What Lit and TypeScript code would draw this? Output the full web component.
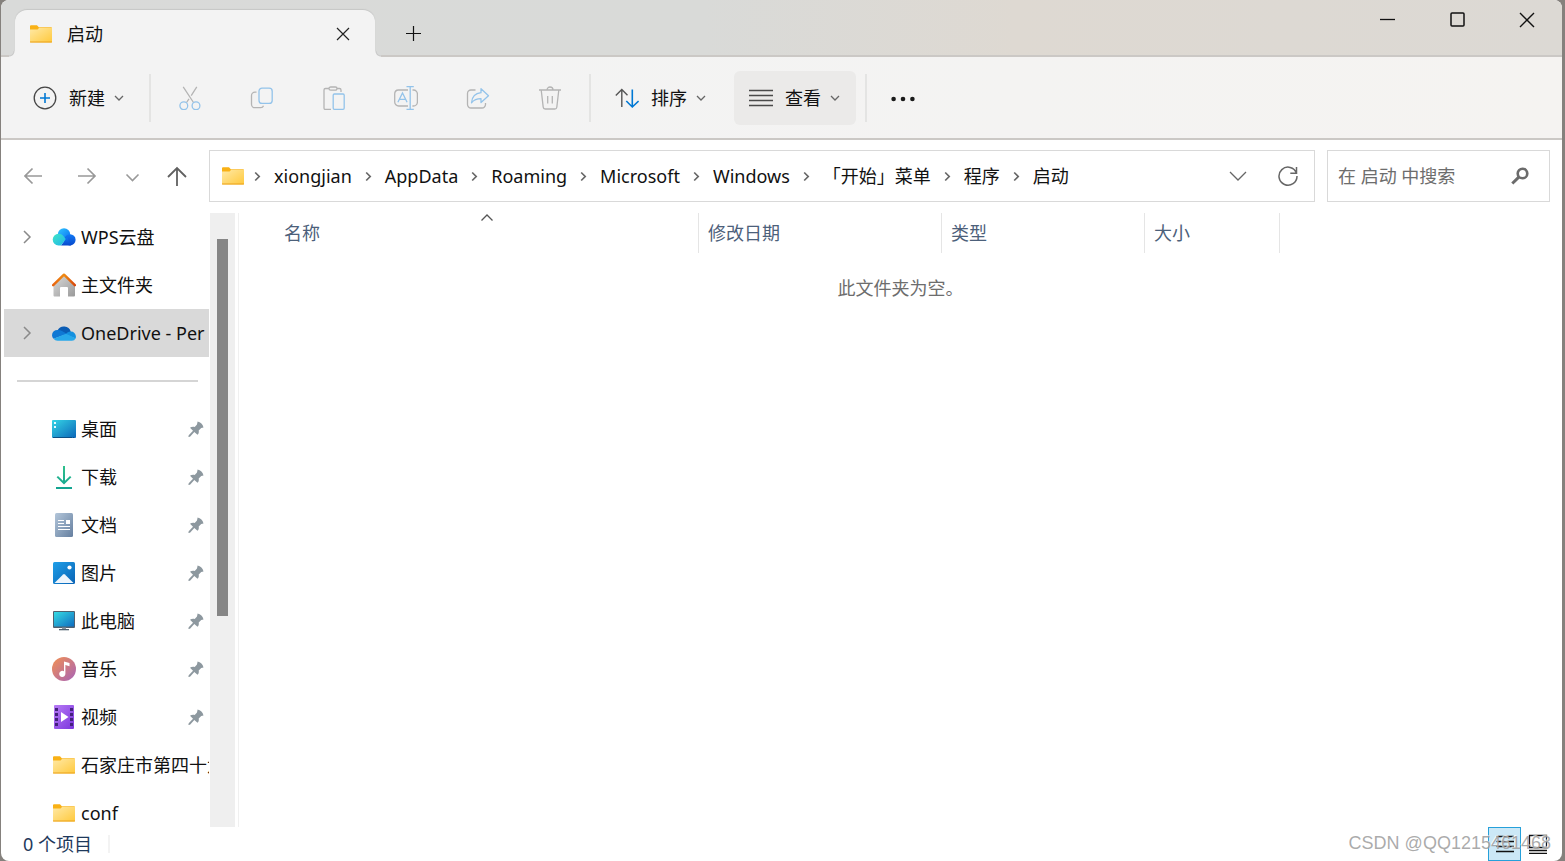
import { LitElement, html, css, svg, nothing } from "lit";
import { customElement, property } from "lit/decorators.js";

const folder = svg`
  <defs><linearGradient id="fo" x1="0" y1="0" x2="1" y2="1"><stop offset="0" stop-color="#ffe9a6"/><stop offset="1" stop-color="#ffc93c"/></linearGradient></defs>
  <path d="M1 4.200a1 1 0 0 1 1-1h6l1.800 2H22a1 1 0 0 1 1 1V12H1z" fill="#f9b115"/>
  <path d="M1 7.400h7.600l1.600-1.600H23v14a.7.7 0 0 1-.7.7H1.700a.7.7 0 0 1-.7-.7z" fill="url(#fo)"/>
  <path d="M1 19.400h22v.5a.7.7 0 0 1-.7.7H1.700a.7.7 0 0 1-.7-.7z" fill="#eba21c"/>`;

const icons: Record<string, unknown> = {
  folder,
  wps: svg`
    <defs>
      <linearGradient id="wa" x1="0" y1="0" x2="1" y2="1"><stop offset="0" stop-color="#2fc7ff"/><stop offset="1" stop-color="#0a6cf0"/></linearGradient>
      <linearGradient id="wb" x1="0" y1="0" x2="1" y2="1"><stop offset="0" stop-color="#3fe6c8"/><stop offset="1" stop-color="#1fb4e8"/></linearGradient>
      <linearGradient id="wc" x1="0" y1="0" x2="0" y2="1"><stop offset="0" stop-color="#1179f5"/><stop offset="1" stop-color="#0849cc"/></linearGradient>
    </defs>
    <circle cx="12" cy="9.400" r="6.200" fill="url(#wa)"/>
    <circle cx="18" cy="14.800" r="5.600" fill="url(#wc)"/>
    <path d="M9 20.400 15 12l4 8.400z" fill="url(#wc)"/>
    <path d="M6.500 8.800c4 0 5.300 2.800 7.300 5.200L9 20.400H6.500a5.800 5.800 0 0 1 0-11.600z" fill="url(#wb)"/>`,
  home: svg`
    <defs>
      <linearGradient id="ha" x1="0" y1="0" x2="1" y2="1"><stop offset="0" stop-color="#d9d9d9"/><stop offset="1" stop-color="#9a9a9a"/></linearGradient>
      <linearGradient id="hb" x1="0" y1="0" x2="1" y2="0"><stop offset="0" stop-color="#e8640f"/><stop offset=".5" stop-color="#ef8b12"/><stop offset="1" stop-color="#d8470b"/></linearGradient>
    </defs>
    <path d="M12 2.500 1.500 12v10.500a1 1 0 0 0 1 1H8v-8.500a1 1 0 0 1 1-1h6a1 1 0 0 1 1 1v8.500h6a1 1 0 0 0 1-1V12z" fill="url(#ha)"/>
    <path d="M1.200 12.200 12 1.700l10.800 10.500" fill="none" stroke="url(#hb)" stroke-width="2.500" stroke-linecap="round" stroke-linejoin="round"/>`,
  onedrive: svg`
    <path d="M5.500 9.500a7.200 7.200 0 0 1 13.300 1.200L14 14.500z" fill="#0a5cb4"/>
    <path d="M5.700 8.900c2.600-.2 4.800.8 9.300 4L1.600 17.800A5 5 0 0 1 0 14.200a5.400 5.400 0 0 1 5.700-5.300z" fill="#0f78d4"/>
    <path d="M18.400 10.600a5 5 0 0 1 5.500 5.300c0 .6-.1 1.100-.4 1.600L13.500 13.500c1.500-1.800 3-2.800 4.900-2.900z" fill="#1490df"/>
    <path d="m1.500 17.700 12.500-5 9.600 4.600a4 4 0 0 1-3.800 2.500H5.500a5.300 5.300 0 0 1-4-2.100z" fill="#28a8ea"/>`,
  desktop: svg`
    <defs><linearGradient id="de" x1="0" y1="0" x2="1" y2="1"><stop offset="0" stop-color="#35d5e6"/><stop offset="1" stop-color="#0b66b8"/></linearGradient></defs>
    <rect y="3" width="24" height="18" rx="1" fill="url(#de)"/>
    <path d="M2 5h2v2H2zM2 9h2v2H2z" fill="#e8fbff"/>
    <path d="M1 20h18v1H1zM19 20h1v1h-1zM21 20h1v1h-1z" fill="#0d4f84"/>`,
  download: svg`
    <defs><linearGradient id="dl" x1="0" y1="0" x2="0" y2="1"><stop offset="0" stop-color="#2fc08c"/><stop offset="1" stop-color="#12a391"/></linearGradient></defs>
    <path d="M11 1h2v14.800l5-4.900 1.400 1.400-7.400 7.200-7.400-7.200L6 10.900l5 4.900zM4 22h16v2H4z" fill="url(#dl)"/>`,
  document: svg`
    <defs><linearGradient id="dc" x1="0" y1="0" x2="1" y2="1"><stop offset="0" stop-color="#b3c6da"/><stop offset="1" stop-color="#657f9f"/></linearGradient></defs>
    <rect x="3" width="18" height="24" rx="1.500" fill="url(#dc)"/>
    <path d="M6 7h6v1H6zM6 10h6v1H6zM6 13h12v1H6zM6 16h12v1H6zM14 7h4v4h-4z" fill="#fff"/>`,
  picture: svg`
    <defs><linearGradient id="pi" x1="0" y1="0" x2="1" y2="1"><stop offset="0" stop-color="#1f9fe8"/><stop offset="1" stop-color="#0a63b5"/></linearGradient></defs>
    <rect x="1" y="1" width="22" height="22" rx="1.500" fill="url(#pi)"/>
    <circle cx="17.500" cy="6.500" r="2.100" fill="#fff"/>
    <path d="m2.500 22 8.600-8.500a1.300 1.300 0 0 1 1.800 0L21.500 22z" fill="#eef5fc"/>`,
  pc: svg`
    <defs><linearGradient id="pc" x1="0" y1="0" x2="1" y2="1"><stop offset="0" stop-color="#35dbe4"/><stop offset="1" stop-color="#0f6cc0"/></linearGradient></defs>
    <rect x="1" y="2" width="22" height="17" rx="1" fill="#4f6170"/>
    <rect x="2" y="3" width="20" height="14.500" fill="url(#pc)"/>
    <path d="M10 18.500h4V20h-4z" fill="#8895a0"/><path d="M7 20h10v1.300H7z" fill="#4f6170"/>`,
  music: svg`
    <defs><linearGradient id="mu" x1="0" y1="0" x2="1" y2="1"><stop offset="0" stop-color="#f39152"/><stop offset="1" stop-color="#a662b8"/></linearGradient></defs>
    <circle cx="12" cy="12" r="12" fill="url(#mu)"/>
    <path d="M12 4.500 17.500 6v3.200L13.400 8v8.800a3.100 3.100 0 1 1-1.400-2.500z" fill="#fff"/>`,
  video: svg`
    <defs><linearGradient id="vi" x1="0" y1="0" x2="1" y2="1"><stop offset="0" stop-color="#b77bf5"/><stop offset="1" stop-color="#7b35dd"/></linearGradient></defs>
    <rect x="2" width="20" height="24" rx="1" fill="url(#vi)"/>
    <path d="M3 3h3v3H3zM3 8h3v3H3zM3 13h3v3H3zM3 18h3v3H3zM18 3h3v3h-3zM18 8h3v3h-3zM18 13h3v3h-3zM18 18h3v3h-3z" fill="#43217c"/>
    <path d="M9 7v10l7.500-5z" fill="#fff"/>`,
  pin: svg`<path d="M9.600.6c2.900.5 5.300 2.700 5.900 5.800l-2.300.5-2.500 2.600c.4 1.900 0 3.200-1.200 4.300L6.300 11 2 15.700.4 16l.3-1.700L5 9.800 2 6.800c1.300-1.100 3-1.200 4.700-.9L9 3.500z" fill="#8d989f"/>`,
  add: svg`<circle cx="12" cy="12" r="10.800" fill="none" stroke="#454545" stroke-width="1.300"/><path d="M12 7v10M7 12h10" stroke="#0078d4" stroke-width="1.600"/>`,
  cut: svg`
    <path d="M5.200.9 15.500 16.500M18.800.9 13.200 9.600M11 12.800 8.500 16.500" stroke="#b4b4b4"/>
    <circle cx="5.800" cy="19.700" r="3.900" stroke="#93c3ea"/><circle cx="18" cy="19.700" r="3.900" stroke="#93c3ea"/>`,
  copy: svg`
    <path d="M6.500 6.200H5A3.500 3.500 0 0 0 1.500 9.700v8.500a3.500 3.500 0 0 0 3.500 3.500h5.500a3 3 0 0 0 3-2" stroke="#b4b4b4"/>
    <rect x="9" y="2.200" width="13.200" height="15.200" rx="3" stroke="#93c3ea"/>`,
  paste: svg`
    <path d="M7 2.500H3.500A1.500 1.500 0 0 0 2 4v18a1.500 1.500 0 0 0 1.500 1.500H9M15 2.500h2.500A1.500 1.500 0 0 1 19 4v2" stroke="#b4b4b4"/>
    <rect x="7" y="1" width="8" height="3.200" rx="1.600" stroke="#b4b4b4"/>
    <rect x="11.200" y="8" width="11" height="15.300" rx="1.200" stroke="#93c3ea"/>`,
  rename: svg`
    <path d="M14 4H4.500A4 4 0 0 0 .7 8v8a4 4 0 0 0 4 4H14M18.500 4h1a4 4 0 0 1 3.900 4v8a4 4 0 0 1-4 4h-1" stroke="#b4b4b4"/>
    <path d="M12.500.7h7.300M12.500 23.300h7.300M16.200.7v22.600M3.900 16.200 8.500 7l4.600 9.200M5.300 13.400h6.400" stroke="#93c3ea"/>`,
  share: svg`
    <path d="M9.500 4H5a3.500 3.500 0 0 0-3.500 3.500v11A3.500 3.500 0 0 0 5 22h11a3.500 3.500 0 0 0 3.500-3.500V17" stroke="#b4b4b4"/>
    <path d="M15 2.700 22.500 9.700 15 16.500v-3.800c-4.300 0-6.700.8-9.500 4 .5-6 3.700-9.400 9.500-10z" stroke="#93c3ea" stroke-linejoin="round"/>`,
  trash: svg`<path d="M1 4h22M9 4a3 3 0 0 1 6 0M3.200 4l2 17.200A2 2 0 0 0 7.200 23h9.600a2 2 0 0 0 2-1.800L20.800 4M9.700 10v7.500M14.300 10v7.500" stroke="#b4b4b4"/>`,
  sort: svg`
    <path d="M6.800 21V3.500M.8 9.500l6-6 5.700 5.700" fill="none" stroke="#555" stroke-width="1.400"/>
    <path d="M17.300 3.500V21M11.300 15l6 6 6.300-6" fill="none" stroke="#0078d4" stroke-width="1.600"/>`,
  lines: svg`<path d="M0 4.500h24M0 9.500h24M0 14.500h24M0 19.500h24" stroke="#4a4a4a" stroke-width="1.300"/>`,
  dots: svg`<g fill="#1a1a1a"><circle cx="2.600" cy="13" r="2.300"/><circle cx="12" cy="13" r="2.300"/><circle cx="21.400" cy="13" r="2.300"/></g>`,
  chevDown: svg`<path d="m2 4 4 4 4-4" fill="none" stroke="#666"/>`,
  chevRecent: svg`<path d="m1.500 5.500 6 6 6-6" fill="none" stroke="#999" stroke-width="1.600"/>`,
  chevAddress: svg`<path d="m1 5 8 8 8-8" fill="none" stroke="#666" stroke-width="1.300"/>`,
  chevUp: svg`<path d="m.5 6.500 5.500-5.500 5.500 5.500" fill="none" stroke="#555"/>`,
  chevRight: svg`<path d="m5 2 6 6-6 6" fill="none" stroke="#8a8a8a" stroke-width="1.500"/>`,
  chevCrumb: svg`<path d="m1.200 2.500 4 4-4 4" fill="none" stroke="#666" stroke-width="1.700"/>`,
  back: svg`<path d="M18 10H1M8.500 2.500 1 10l7.500 7.500" fill="none" stroke="#999" stroke-width="1.700"/>`,
  forward: svg`<path d="M1 10h17M10.500 2.500 18 10l-7.500 7.500" fill="none" stroke="#999" stroke-width="1.700"/>`,
  up: svg`<path d="M10 20V2M1 11l9-9 9 9" fill="none" stroke="#606060" stroke-width="1.800"/>`,
  refresh: svg`<path d="M18.500 7.200A9 9 0 1 0 19 10M18.500 1v6.200h-6.200" fill="none" stroke="#666" stroke-width="1.500"/>`,
  search: svg`<circle cx="11.500" cy="6.500" r="4.800" fill="none" stroke="#6b6b6b" stroke-width="2.600"/><path d="m7.800 10.200-6.500 6.300" stroke="#6b6b6b" stroke-width="3"/>`,
  close: svg`<path d="m1 1 14 14M15 1 1 15" stroke="#111" stroke-width="1.400"/>`,
  tabClose: svg`<path d="m1 1 12 12M13 1 1 13" stroke="#222" stroke-width="1.200"/>`,
  plus: svg`<path d="M7.500 0v15M0 7.500h15" stroke="#111" stroke-width="1.200"/>`,
  minimise: svg`<path d="M0 7.500h15" stroke="#111"/>`,
  maximise: svg`<rect x="1" y="1" width="13" height="13" rx="1" fill="none" stroke="#111" stroke-width="1.500"/>`,
  details: svg`<path d="M1 2.500h18M1 7.500h18M1 12.500h18M1 17.500h18" stroke="#111"/>`,
  tiles: svg`<path d="M1.500 1.500h17v12h-17zM1 16.500h18M1 19.500h18" fill="none" stroke="#111"/>`,
};

const icon = (name: string, w = 24, h = w) =>
  html`<svg width=${w} height=${h} viewBox="0 0 ${w} ${h}" fill="none" stroke-width="1.300" aria-hidden="true">${icons[name]}</svg>`;

const FONT = css`
  :host { box-sizing: border-box; font: 18px/24px "Noto Sans", "Noto Sans CJK SC", sans-serif; color: #111; }
  * { box-sizing: border-box; }
  svg { display: block; flex: none; }
  button { font: inherit; color: inherit; background: none; border: 0; padding: 0; margin: 0;
    display: flex; align-items: center; justify-content: center; }
`;

@customElement("title-bar")
class TitleBar extends LitElement {
  static styles = [FONT, css`
    :host { display: flex; height: 57px; flex: none; padding-left: 14px;
      background: linear-gradient(#cbc8c5, #cbc8c5) 0 100% / 100% 2px no-repeat,
        linear-gradient(90deg, #d9dad9, #d9dad8 45%, #ded9d2 65%, #dcd9d4); }
    .tab { position: relative; display: flex; align-items: center; width: 360px; height: 47px; margin-top: 10px;
      padding: 0 14px; background: #f3f3f3; border-radius: 12px 12px 0 0; box-shadow: 0 -1px 1px #c6c7c6; }
    .tab::before, .tab::after { content: ""; position: absolute; bottom: 0; width: 6px; height: 6px; }
    .tab::before { left: -6px; background: radial-gradient(circle at 0 0, #d9dad9 4px, #c8c8c8 5px, #f3f3f3 6px); }
    .tab::after { right: -6px; background: radial-gradient(circle at 100% 0, #d9dad9 4px, #c8c8c8 5px, #f3f3f3 6px); }
    .name { margin-left: 14px; flex: 1; }
    .close { width: 36px; height: 32px; }
    .new { width: 48px; height: 47px; margin: 10px 0 0 14px; }
    .controls { display: flex; margin-left: auto; }
    .controls button { width: 70px; height: 39px; }
  `];
  render() {
    return html`
      <div class="tab">${icon("folder")}<span class="name">启动</span>
        <button class="close" aria-label="关闭标签页">${icon("tabClose", 14)}</button></div>
      <button class="new" aria-label="新标签页">${icon("plus", 15)}</button>
      <div class="controls">
        <button aria-label="最小化">${icon("minimise", 15)}</button>
        <button aria-label="最大化">${icon("maximise", 15)}</button>
        <button aria-label="关闭">${icon("close", 16)}</button>
      </div>`;
  }
}

@customElement("tool-bar")
class ToolBar extends LitElement {
  static styles = [FONT, css`
    :host { display: flex; align-items: center; height: 83px; flex: none; padding-left: 17px;
      background: linear-gradient(90deg, #f3f3f3 30%, #f5f3f1); border-bottom: 2px solid #cbc8c5; }
    .menu { width: 122px; height: 54px; border-radius: 6px; gap: 12px; }
    .menu svg:last-child { margin-left: -4px; }
    .on { background: #ebeae9; }
    .rule { width: 2px; height: 48px; margin: 0 9px; background: #e4e4e3; }
    .tools, .menus { display: flex; gap: 12px; }
    .tools button { width: 60px; height: 54px; }
    .more { width: 54px; height: 54px; }
  `];
  menu(ic: string, label: string, on = false) {
    return html`<button class="menu ${on ? "on" : ""}">${icon(ic)}<span>${label}</span>${icon("chevDown", 12)}</button>`;
  }
  render() {
    const tools = [["cut", "剪切"], ["copy", "复制"], ["paste", "粘贴"], ["rename", "重命名"], ["share", "共享"], ["trash", "删除"]];
    return html`
      ${this.menu("add", "新建")}
      <div class="rule"></div>
      <div class="tools">${tools.map(([i, l]) => html`<button aria-label=${l}>${icon(i)}</button>`)}</div>
      <div class="rule"></div>
      <div class="menus">${this.menu("sort", "排序")}${this.menu("lines", "查看", true)}</div>
      <div class="rule"></div>
      <button class="more" aria-label="更多">${icon("dots")}</button>`;
  }
}

@customElement("address-bar")
class AddressBar extends LitElement {
  static styles = [FONT, css`
    :host { display: flex; height: 73px; flex: none; padding: 10px 12px 11px 11px; }
    .history { display: flex; gap: 9px; width: 197px; flex: none; }
    .history button { width: 44px; }
    .history .recent { width: 28px; }
    .address { display: flex; align-items: center; flex: 1; min-width: 0; border: 1px solid #d9d9d9; padding: 0 6px 0 11px; }
    .crumbs { display: flex; align-items: center; flex: 1; min-width: 0; overflow: hidden; white-space: nowrap; }
    .crumbs a { color: #111; text-decoration: none; }
    .sep { margin: 0 13px; }
    .sep:first-child { margin-left: 9px; }
    .address button { width: 40px; height: 50px; margin-left: 10px; }
    .search { display: flex; align-items: center; width: 223px; margin-left: 12px; border: 1px solid #d9d9d9; padding: 0 20px 0 10px; }
    input { flex: 1; min-width: 0; height: 48px; font: inherit; border: 0; outline: 0; padding: 0; background: none; }
    input::placeholder { color: #6d6d6d; opacity: 1; }
  `];
  render() {
    const path = ["xiongjian", "AppData", "Roaming", "Microsoft", "Windows", "「开始」菜单", "程序", "启动"];
    return html`
      <div class="history">
        <button aria-label="后退">${icon("back", 20)}</button>
        <button aria-label="前进">${icon("forward", 20)}</button>
        <button class="recent" aria-label="最近位置">${icon("chevRecent", 15)}</button>
        <button aria-label="向上">${icon("up", 20)}</button>
      </div>
      <div class="address">
        ${icon("folder")}
        <nav class="crumbs">${path.map((p) => html`<span class="sep">${icon("chevCrumb", 7, 12)}</span><a href="#">${p}</a>`)}</nav>
        <button aria-label="历史记录">${icon("chevAddress", 18)}</button>
        <button aria-label="刷新">${icon("refresh", 20)}</button>
      </div>
      <label class="search"><input type="text" placeholder="在 启动 中搜索" aria-label="搜索">${icon("search", 18)}</label>`;
  }
}

interface Place { icon: string; label: string; expand?: boolean; pin?: boolean; selected?: boolean }

@customElement("side-tree")
class SideTree extends LitElement {
  @property({ attribute: false }) places: (Place | null)[] = [];
  static styles = [FONT, css`
    :host { display: flex; width: 238px; flex: none; border-right: 1px solid #f0f0f0; overflow: hidden; }
    .list { width: 208px; padding-left: 3px; margin: 0; list-style: none; overflow: hidden; }
    li { height: 48px; }
    .row { display: flex; align-items: center; height: 48px; padding-left: 15px; color: #111; text-decoration: none; white-space: nowrap; }
    .selected { background: #d9d9d9; }
    .twist { width: 33px; flex: none; }
    .label { margin-left: 5px; flex: 1; min-width: 0; overflow: hidden; }
    .pin { margin-right: 5px; }
    .gap { display: flex; align-items: center; padding: 0 11px 0 13px; }
    hr { flex: 1; height: 2px; border: 0; margin: 0; background: #d5d5d5; }
    .track { width: 25px; margin-left: 1px; padding: 26px 7px 0; background: #efefef; }
    .thumb { height: 377px; background: #868686; }
  `];
  render() {
    return html`
      <ul class="list">${this.places.map((p) => p
        ? html`<li><a href="#" class="row ${p.selected ? "selected" : ""}">
            <span class="twist">${p.expand ? icon("chevRight", 16) : nothing}</span>${icon(p.icon)}
            <span class="label">${p.label}</span>${p.pin ? html`<span class="pin">${icon("pin", 16)}</span>` : nothing}</a></li>`
        : html`<li class="gap"><hr></li>`)}</ul>
      <div class="track"><div class="thumb"></div></div>`;
  }
}

@customElement("file-list")
class FileList extends LitElement {
  static styles = [FONT, css`
    :host { display: block; flex: 1; min-width: 0; overflow: hidden; }
    table { border-collapse: separate; border-spacing: 0; table-layout: fixed; margin-left: 36px; width: 1005px; }
    th { position: relative; height: 40px; padding: 0 0 0 9px; text-align: left; font-weight: 400; color: #4c607a;
      border-right: 1px solid #e5e5e5; }
    .name { width: 424px; }
    .date { width: 243px; }
    .type { width: 203px; }
    .sorted { position: absolute; top: 1px; left: 0; right: 0; display: flex; justify-content: center; }
    .empty { margin: 23px 0 0; text-align: center; color: #6d6d6d; }
  `];
  render() {
    return html`
      <table><thead><tr>
        <th class="name" scope="col" aria-sort="ascending">名称<span class="sorted">${icon("chevUp", 12, 8)}</span></th>
        <th class="date" scope="col">修改日期</th><th class="type" scope="col">类型</th><th scope="col">大小</th>
      </tr></thead></table>
      <p class="empty">此文件夹为空。</p>`;
  }
}

@customElement("status-bar")
class StatusBar extends LitElement {
  static styles = [FONT, css`
    :host { position: relative; display: flex; align-items: center; height: 34px; flex: none; padding: 0 8px 0 22px; color: #1e395b; }
    .count { padding-right: 16px; border-right: 2px solid #f3f3f3; line-height: 18px; }
    .views { display: flex; margin-left: auto; height: 34px; }
    .views button { width: 33px; }
    .views .on { border: 1px solid #26a0da; background: #cce8f6; }
    .mark { position: absolute; right: 11px; top: 4px; font-family: "Liberation Sans", Arial, sans-serif;
      color: #9c9c9cd9; text-shadow: -1px -1px 0 #ffffffb0; }
  `];
  render() {
    return html`
      <span class="count">0 个项目</span>
      <div class="views">
        <button class="on" aria-label="详细信息">${icon("details", 20)}</button>
        <button aria-label="大缩略图">${icon("tiles", 20)}</button>
      </div>
      <span class="mark">CSDN @QQ1215461468</span>`;
  }
}

@customElement("app-root")
class AppRoot extends LitElement {
  static styles = css`
    :host { display: block; box-sizing: border-box; height: 100vh; padding: 0 3px 0 1px; background: #85817d; }
    .window { display: flex; flex-direction: column; height: 100%; background: #fff; border-radius: 8px; overflow: hidden; }
    .body { display: flex; flex: 1; min-height: 0; }
  `;
  places: (Place | null)[] = [
    { icon: "wps", label: "WPS云盘", expand: true },
    { icon: "home", label: "主文件夹" },
    { icon: "onedrive", label: "OneDrive - Per", expand: true, selected: true },
    null,
    { icon: "desktop", label: "桌面", pin: true },
    { icon: "download", label: "下载", pin: true },
    { icon: "document", label: "文档", pin: true },
    { icon: "picture", label: "图片", pin: true },
    { icon: "pc", label: "此电脑", pin: true },
    { icon: "music", label: "音乐", pin: true },
    { icon: "video", label: "视频", pin: true },
    { icon: "folder", label: "石家庄市第四十六" },
    { icon: "folder", label: "conf" },
  ];
  render() {
    return html`<div class="window">
      <title-bar></title-bar>
      <tool-bar></tool-bar>
      <address-bar></address-bar>
      <div class="body"><side-tree .places=${this.places}></side-tree><file-list></file-list></div>
      <status-bar></status-bar>
    </div>`;
  }
}
